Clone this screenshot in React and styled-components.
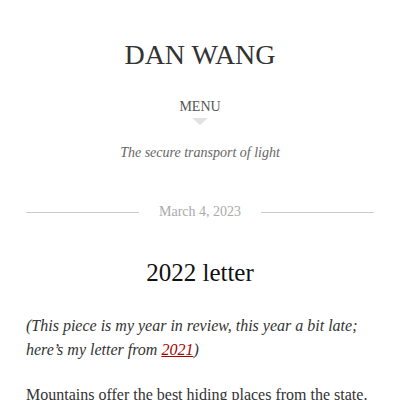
import React from 'react';
import styled, { createGlobalStyle } from 'styled-components';

const Global = createGlobalStyle`
  body {
    margin: 0;
    background: #ffffff;
    font-family: "Liberation Serif", "Times New Roman", serif;
    color: #333;
  }
`;

const Page = styled.div`
  width: 400px;
  height: 400px;
  overflow: hidden;
`;

const Header = styled.header`
  display: flex;
  flex-direction: column;
  align-items: center;
  padding-top: 38px;
`;

const SiteTitle = styled.h1`
  margin: 0;
  font-size: 28px;
  font-weight: normal;
  line-height: 34px;
  color: #333;
`;

const Menu = styled.div`
  margin-top: 27px;
  display: flex;
  flex-direction: column;
  align-items: center;
  font-size: 14px;
  line-height: 16px;
  color: #555;
`;

const Arrow = styled.span`
  margin-top: 3px;
  width: 0;
  height: 0;
  border-left: 8px solid transparent;
  border-right: 8px solid transparent;
  border-top: 7px solid #e2e2e2;
`;

const Tagline = styled.p`
  margin: 19px 0 0;
  font-size: 14px;
  font-style: italic;
  line-height: 18px;
  color: #666;
`;

const Main = styled.main`
  padding: 0 26px;
`;

const DateRow = styled.div`
  margin-top: 42px;
  display: flex;
  align-items: center;
  gap: 20px;
  font-size: 14px;
  line-height: 16px;
  color: #aaa;

  &::before,
  &::after {
    content: '';
    flex: 1;
    height: 1px;
    background: #ccc;
  }
`;

const PostTitle = styled.h2`
  margin: 38px 0 0;
  text-align: center;
  font-size: 25px;
  font-weight: normal;
  line-height: 30px;
  color: #111;
`;

const Para = styled.p`
  margin: ${(p) => (p.$first ? '26px' : '21px')} 0 0;
  font-size: 16px;
  line-height: 24px;
  font-style: ${(p) => (p.$italic ? 'italic' : 'normal')};
  color: #333;
`;

const Link = styled.a`
  color: #a30000;
  text-decoration: underline;
`;

export default function App() {
  return (
    <Page>
      <Global />
      <Header>
        <SiteTitle>DAN WANG</SiteTitle>
        <Menu>
          MENU
          <Arrow />
        </Menu>
        <Tagline>The secure transport of light</Tagline>
      </Header>
      <Main>
        <DateRow>March 4, 2023</DateRow>
        <PostTitle>2022 letter</PostTitle>
        <Para $first $italic>
          (This piece is my year in review, this year a bit late; here’s my letter from{' '}
          <Link href="#">2021</Link>)
        </Para>
        <Para>Mountains offer the best hiding places from the state.</Para>
      </Main>
    </Page>
  );
}
